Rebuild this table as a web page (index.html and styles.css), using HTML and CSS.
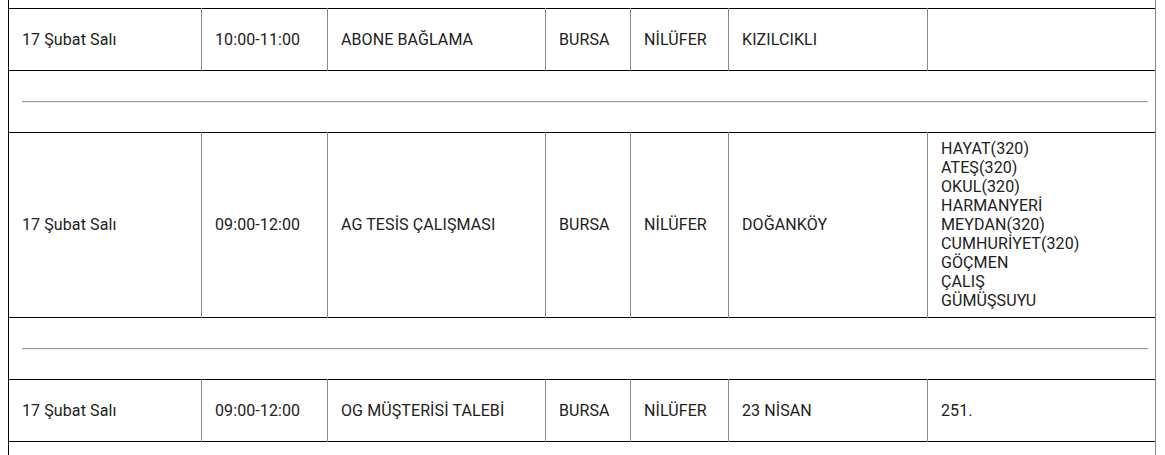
FILE: index.html
```html
<!DOCTYPE html>
<html lang="tr">
<head>
<meta charset="utf-8">
<title>Kesinti Listesi</title>
<link rel="stylesheet" href="styles.css">
</head>
<body>
<div class="page">
<table class="outages">
  <colgroup>
    <col class="c-date"><col class="c-time"><col class="c-reason"><col class="c-city"><col class="c-district"><col class="c-hood"><col class="c-streets">
  </colgroup>
  <tbody>
    <tr class="spacer"><td colspan="7"><hr></td></tr>
    <tr class="row">
      <td>17 Şubat Salı</td><td>10:00-11:00</td><td>ABONE BAĞLAMA</td><td>BURSA</td><td>NİLÜFER</td><td>KIZILCIKLI</td><td></td>
    </tr>
    <tr class="spacer"><td colspan="7"><hr></td></tr>
    <tr class="row tall">
      <td>17 Şubat Salı</td><td>09:00-12:00</td><td>AG TESİS ÇALIŞMASI</td><td>BURSA</td><td>NİLÜFER</td><td>DOĞANKÖY</td>
      <td>HAYAT(320)<br>ATEŞ(320)<br>OKUL(320)<br>HARMANYERİ<br>MEYDAN(320)<br>CUMHURİYET(320)<br>GÖÇMEN<br>ÇALIŞ<br>GÜMÜŞSUYU</td>
    </tr>
    <tr class="spacer"><td colspan="7"><hr></td></tr>
    <tr class="row">
      <td>17 Şubat Salı</td><td>09:00-12:00</td><td>OG MÜŞTERİSİ TALEBİ</td><td>BURSA</td><td>NİLÜFER</td><td>23 NİSAN</td><td>251.</td>
    </tr>
    <tr class="spacer"><td colspan="7"><hr></td></tr>
  </tbody>
</table>
</div>
</body>
</html>
```

FILE: styles.css
```css
html, body {
  margin: 0;
  padding: 0;
  background: #ffffff;
  overflow: hidden;
}

.page {
  padding-left: 8px;
}

.outages {
  border-collapse: collapse;
  table-layout: fixed;
  width: 1148px;
  margin-top: -54px;
  font-family: Roboto, "Liberation Sans", sans-serif;
  font-size: 16px;
  letter-spacing: 0.1px;
  color: #212121;
  border-left: 1px solid #000;
  border-right: 1px solid #888;
}

.c-date { width: 193px; }
.c-time { width: 126px; }
.c-reason { width: 218px; }
.c-city { width: 85px; }
.c-district { width: 98px; }
.c-hood { width: 199px; }
.c-streets { width: 228px; }

.outages tr {
  border-top: 1px solid #000;
  border-bottom: 1px solid #000;
}

.row td {
  height: 49px;
  padding: 6px 13px;
  vertical-align: middle;
  border-left: 1px solid #888;
  border-right: 1px solid #888;
  line-height: 19px;
}

.row.tall td {
  padding-bottom: 7px;
}

.row td:first-child {
  border-left: 1px solid #000;
}

.spacer td {
  height: 61px;
  padding: 0 7px 0 13px;
  vertical-align: middle;
}

.spacer hr {
  margin: 0;
  border: 0;
  border-top: 1px solid #9a9a9a;
  border-bottom: 1px solid #eeeeee;
}
```
